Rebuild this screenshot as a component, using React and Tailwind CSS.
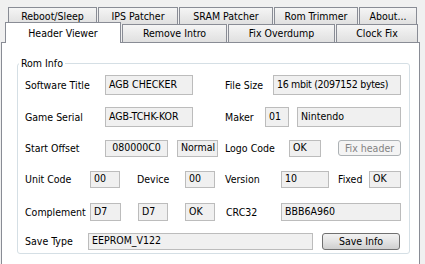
const topTabs = [
  { label: 'Reboot/Sleep', cls: 'w-[89px]' },
  { label: 'IPS Patcher', cls: 'w-[80px] ml-[1px]' },
  { label: 'SRAM Patcher', cls: 'w-[94px] ml-[1px]' },
  { label: 'Rom Trimmer', cls: 'w-[84px] ml-[1px]' },
  { label: 'About...', cls: 'w-[58px] ml-[1px]' },
]

const lowTabs = [
  { label: 'Remove Intro', cls: 'w-[105px] ml-[1px]' },
  { label: 'Fix Overdump', cls: 'w-[107px] ml-[1px]' },
  { label: 'Clock Fix', cls: 'w-[82px] ml-[1px]' },
]

const Tab = ({ label, cls }) => (
  <div
    className={`flex items-center justify-center h-full border border-b-0 border-[#898c95] bg-linear-to-b from-[#f5f5f5] to-[#e0e0e0] whitespace-nowrap ${cls}`}
  >
    {label}
  </div>
)

const Label = ({ children, cls }) => <span className={`whitespace-nowrap shrink-0 ${cls}`}>{children}</span>

const Box = ({ children, cls }) => (
  <div className={`flex items-center shrink-0 px-[3px] pb-[1px] border border-[#bcbcbc] bg-[#f0f0f0] whitespace-nowrap overflow-hidden ${cls}`}>
    {children}
  </div>
)

export default function App() {
  return (
    <div className="w-[425px] h-[264px] overflow-hidden bg-[#f0f0f0] text-[10.5px] leading-[13px] text-black font-['DejaVu_Sans_Condensed','Liberation_Sans',sans-serif]">
      {/* tab strip */}
      <div className="flex h-[17px] mt-[7px] ml-[8px]">
        {topTabs.map((t) => (
          <Tab key={t.label} {...t} />
        ))}
      </div>
      <div className="flex h-[18px] ml-[5px]">
        <div className="relative z-10 -mt-[2px] h-[21px] w-[116px] flex items-center justify-center border border-b-0 border-[#898c95] bg-white">
          Header Viewer
        </div>
        {lowTabs.map((t) => (
          <Tab key={t.label} {...t} />
        ))}
      </div>

      {/* page */}
      <div className="ml-[1px] w-[419px] h-[240px] border border-[#898c95] bg-white pt-[14px]">
        <fieldset className="ml-[15px] w-[393px] border border-[#d5dfe5] rounded-[3px] pb-[1px]">
          <legend className="ml-[1px] px-[2px]">Rom Info</legend>

          <div className="flex items-center h-[20px] mt-[5px]">
            <Label cls="ml-[7px] w-[80px]">Software Title</Label>
            <Box cls="w-[88px] h-[20px]">AGB CHECKER</Box>
            <Label cls="ml-[32px] w-[48px]">File Size</Label>
            <Box cls="w-[128px] h-[20px] tracking-[-0.3px]">16 mbit (2097152 bytes)</Box>
          </div>

          <div className="flex items-center h-[20px] mt-[12px]">
            <Label cls="ml-[7px] w-[80px]">Game Serial</Label>
            <Box cls="w-[88px] h-[20px]">AGB-TCHK-KOR</Box>
            <Label cls="ml-[32px] w-[40px]">Maker</Label>
            <Box cls="w-[24px] h-[20px]">01</Box>
            <Box cls="ml-[8px] w-[104px] h-[20px]">Nintendo</Box>
          </div>

          <div className="flex items-center h-[20px] mt-[11px]">
            <Label cls="ml-[7px] w-[80px]">Start Offset</Label>
            <Box cls="w-[63px] h-[17px] justify-center">080000C0</Box>
            <Box cls="ml-[9px] w-[41px] h-[17px]">Normal</Box>
            <Label cls="ml-[7px] w-[64px]">Logo Code</Label>
            <Box cls="w-[32px] h-[17px]">OK</Box>
            <button
              disabled
              className="ml-[17px] w-[63px] h-[16px] flex items-center justify-center border border-[#adb2b5] rounded-[3px] bg-[#f4f4f4] text-[#838383]"
            >
              Fix header
            </button>
          </div>

          <div className="flex items-center h-[20px] mt-[11px]">
            <Label cls="ml-[7px] w-[65px]">Unit Code</Label>
            <Box cls="w-[30px] h-[17px]">00</Box>
            <Label cls="ml-[17px] w-[48px]">Device</Label>
            <Box cls="w-[30px] h-[17px]">00</Box>
            <Label cls="ml-[10px] w-[56px]">Version</Label>
            <Box cls="w-[48px] h-[17px]">10</Box>
            <Label cls="ml-[9px] w-[31px]">Fixed</Label>
            <Box cls="w-[32px] h-[17px]">OK</Box>
          </div>

          <div className="flex items-center h-[20px] mt-[13px]">
            <Label cls="ml-[7px] w-[65px]">Complement</Label>
            <Box cls="w-[31px] h-[18px]">D7</Box>
            <Box cls="ml-[17px] w-[30px] h-[18px]">D7</Box>
            <Box cls="ml-[17px] w-[30px] h-[18px]">OK</Box>
            <Label cls="ml-[11px] w-[55px]">CRC32</Label>
            <Box cls="w-[120px] h-[18px]">BBB6A960</Box>
          </div>

          <div className="flex items-center h-[20px] mt-[9px] mb-[1px]">
            <Label cls="ml-[7px] w-[63px]">Save Type</Label>
            <Box cls="w-[225px] h-[17px]">EEPROM_V122</Box>
            <button className="ml-[9px] w-[78px] h-[17px] flex items-center justify-center border border-[#707070] rounded-[3px] bg-linear-to-b from-[#f2f2f2] via-[#e3e3e3] to-[#cfcfcf]">
              Save Info
            </button>
          </div>
        </fieldset>
      </div>
    </div>
  )
}
